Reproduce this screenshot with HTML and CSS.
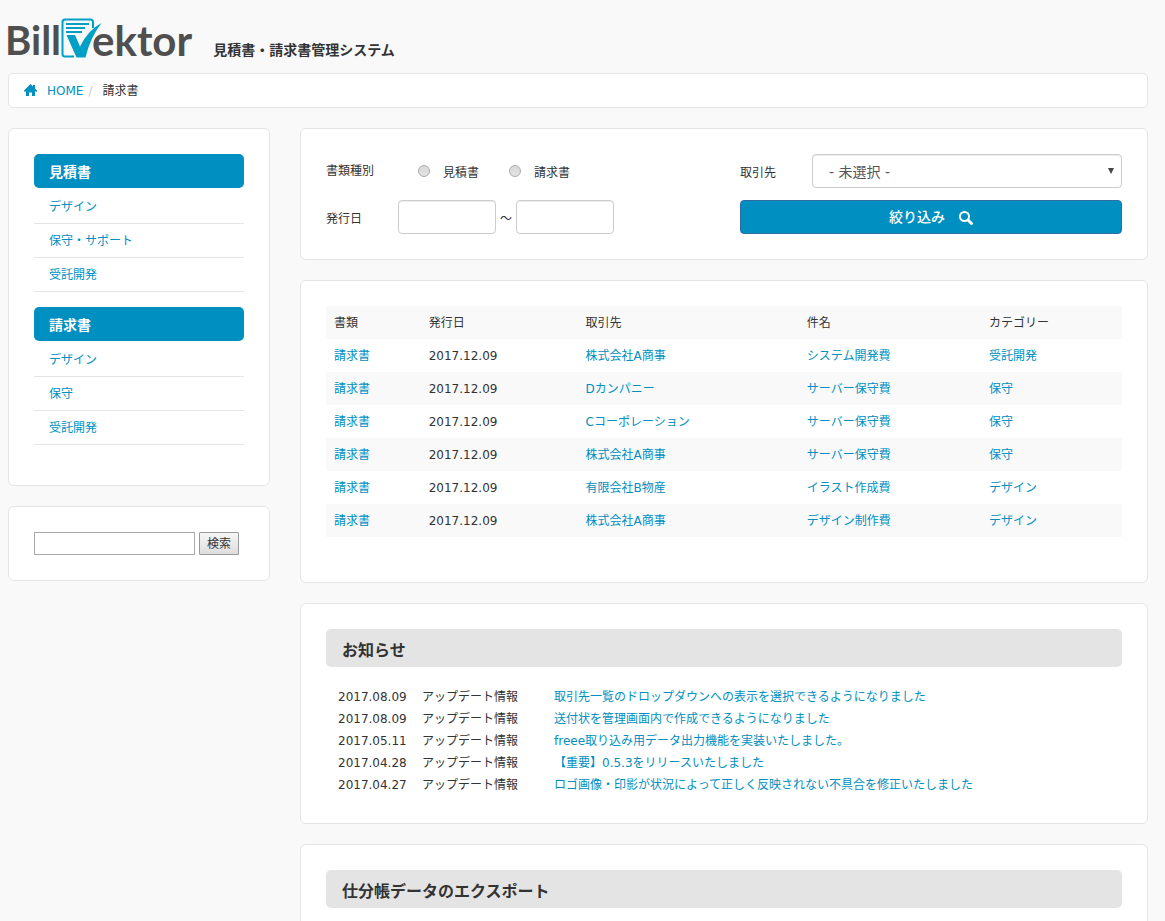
FILE: index.html
```html
<!DOCTYPE html>
<html lang="ja">
<head>
<meta charset="utf-8">
<title>BillVektor</title>
<meta name="viewport" content="width=device-width, initial-scale=1">
<link rel="stylesheet" href="styles.css">
</head>
<body>
<header class="site-header">
  <a class="logo" href="#" aria-label="BillVektor">
    <span class="logo-bill">Bill</span>
    <svg class="logo-mark" viewBox="0 0 41 42" aria-hidden="true">
      <path d="M32 10V4Q32 1.500 29.500 1.500H4Q1.500 1.500 1.500 4V36Q1.500 38.500 4 38.500H13" fill="none" stroke="#00a0c6" stroke-width="2"/>
      <path d="M5 6H28M5 10H24M5 14H21" fill="none" stroke="#00a0c6" stroke-width="2"/>
      <path d="M5.500 17H14L19 28.500Q27 12 40.500 5Q29 20 24.500 39.500H15.500Z" fill="#00a0c6"/>
    </svg>
    <span>ektor</span>
  </a>
  <p class="tagline">見積書・請求書管理システム</p>
</header>
<nav aria-label="パンくず">
  <ol class="breadcrumb">
    <li><a href="#"><svg class="home-icon" viewBox="0 0 13 12" aria-hidden="true"><path d="M6.500 0L9 2.500V1H11V4.500L13 6.500V7.500H11V12H8V8.500H5V12H2V7.500H0V6.500Z" fill="currentColor"/></svg>HOME</a></li>
    <li>請求書</li>
  </ol>
</nav>
<div class="columns">
  <aside class="sidebar">
    <nav class="card">
      <h2 class="side-title">見積書</h2>
      <ul class="side-list">
        <li><a href="#">デザイン</a></li>
        <li><a href="#">保守・サポート</a></li>
        <li><a href="#">受託開発</a></li>
      </ul>
      <h2 class="side-title">請求書</h2>
      <ul class="side-list">
        <li><a href="#">デザイン</a></li>
        <li><a href="#">保守</a></li>
        <li><a href="#">受託開発</a></li>
      </ul>
    </nav>
    <form class="card search">
      <input type="text" aria-label="検索">
      <button type="button">検索</button>
    </form>
  </aside>
  <main class="main">
    <form class="card filter">
      <div class="filter-col">
        <div class="filter-row" role="radiogroup" aria-labelledby="kind">
          <span class="filter-label" id="kind">書類種別</span>
          <label class="radio"><input type="radio" name="kind"><span>見積書</span></label>
          <label class="radio"><input type="radio" name="kind"><span>請求書</span></label>
        </div>
        <div class="filter-row">
          <label class="filter-label low" for="from">発行日</label>
          <input class="control date" type="text" id="from">
          <span class="tilde">～</span>
          <input class="control date" type="text" aria-label="発行日 終了">
        </div>
      </div>
      <div class="filter-col">
        <div class="filter-row">
          <label class="filter-label low" for="client">取引先</label>
          <div class="select-wrap">
            <select class="control" id="client"><option>- 未選択 -</option></select>
          </div>
        </div>
        <button class="submit" type="button">絞り込み
          <svg class="search-icon" viewBox="0 0 14 14" aria-hidden="true"><circle cx="5.500" cy="5.500" r="4.500" fill="none" stroke="currentColor" stroke-width="2"/><path d="M9 9L12.500 12.500" stroke="currentColor" stroke-width="3" stroke-linecap="round"/></svg>
        </button>
      </div>
    </form>
    <section class="card">
      <table class="docs">
        <colgroup><col class="c-kind"><col class="c-date"><col class="c-client"><col class="c-title"><col></colgroup>
        <thead><tr><th>書類</th><th>発行日</th><th>取引先</th><th>件名</th><th>カテゴリー</th></tr></thead>
        <tbody>
          <tr><td><a href="#">請求書</a></td><td>2017.12.09</td><td><a href="#">株式会社A商事</a></td><td><a href="#">システム開発費</a></td><td><a href="#">受託開発</a></td></tr>
          <tr><td><a href="#">請求書</a></td><td>2017.12.09</td><td><a href="#">Dカンパニー</a></td><td><a href="#">サーバー保守費</a></td><td><a href="#">保守</a></td></tr>
          <tr><td><a href="#">請求書</a></td><td>2017.12.09</td><td><a href="#">Cコーポレーション</a></td><td><a href="#">サーバー保守費</a></td><td><a href="#">保守</a></td></tr>
          <tr><td><a href="#">請求書</a></td><td>2017.12.09</td><td><a href="#">株式会社A商事</a></td><td><a href="#">サーバー保守費</a></td><td><a href="#">保守</a></td></tr>
          <tr><td><a href="#">請求書</a></td><td>2017.12.09</td><td><a href="#">有限会社B物産</a></td><td><a href="#">イラスト作成費</a></td><td><a href="#">デザイン</a></td></tr>
          <tr><td><a href="#">請求書</a></td><td>2017.12.09</td><td><a href="#">株式会社A商事</a></td><td><a href="#">デザイン制作費</a></td><td><a href="#">デザイン</a></td></tr>
        </tbody>
      </table>
    </section>
    <section class="card">
      <h2 class="section-title">お知らせ</h2>
      <table class="news">
        <tbody>
          <tr><td>2017.08.09</td><td>アップデート情報</td><td><a href="#">取引先一覧のドロップダウンへの表示を選択できるようになりました</a></td></tr>
          <tr><td>2017.08.09</td><td>アップデート情報</td><td><a href="#">送付状を管理画面内で作成できるようになりました</a></td></tr>
          <tr><td>2017.05.11</td><td>アップデート情報</td><td><a href="#">freee取り込み用データ出力機能を実装いたしました。</a></td></tr>
          <tr><td>2017.04.28</td><td>アップデート情報</td><td><a href="#">【重要】0.5.3をリリースいたしました</a></td></tr>
          <tr><td>2017.04.27</td><td>アップデート情報</td><td><a href="#">ロゴ画像・印影が状況によって正しく反映されない不具合を修正いたしました</a></td></tr>
        </tbody>
      </table>
    </section>
    <section class="card">
      <h2 class="section-title">仕分帳データのエクスポート</h2>
    </section>
  </main>
</div>
</body>
</html>
```
FILE: styles.css
```css
* { box-sizing: border-box; }

body {
  margin: 0;
  padding: 0 17px 20px 8px;
  background: #f9f9f9;
  color: #333;
  font: 12px/17px "DejaVu Sans", "Noto Sans CJK JP", sans-serif;
}

a { color: #008fc1; text-decoration: none; }
ul, ol { margin: 0; padding: 0; list-style: none; }
h2, p { margin: 0; }

input, button, select { font: inherit; color: inherit; }

.site-header {
  display: flex;
  align-items: flex-end;
  gap: 21px;
  height: 73px;
  padding-bottom: 13px;
}

.logo {
  display: flex;
  align-items: flex-end;
  margin-left: -3px;
  color: #4f4f4f;
  font: bold 42px/40px Lato, sans-serif;
}

.logo-bill { font-size: 40px; }

.logo-mark {
  width: 41px;
  height: 42px;
  margin: 0 -10px 0 0;
}

.tagline { font-size: 14px; font-weight: bold; line-height: 20px; }

.breadcrumb {
  display: flex;
  padding: 9px 15px 7px;
  background: #fff;
  border: 1px solid #e5e5e5;
  border-radius: 5px;
}

.breadcrumb li + li::before {
  content: "/";
  padding: 0 10px 0 5px;
  color: #ccc;
}

.home-icon { width: 13px; height: 12px; margin-right: 10px; vertical-align: -1px; }

.columns {
  display: grid;
  grid-template-columns: 262fr 848fr;
  gap: 30px;
  align-items: start;
  margin-top: 20px;
}

.sidebar, .main { display: grid; gap: 20px; min-width: 0; }

.card {
  padding: 25px;
  background: #fff;
  border: 1px solid #e5e5e5;
  border-radius: 6px;
}

.side-title {
  padding: 8px 15px 6px;
  border-radius: 5px;
  background: #008fc1;
  color: #fff;
  font-size: 14px;
  line-height: 20px;
}

.side-list { padding-top: 2px; margin-bottom: 15px; }

.side-list a {
  display: block;
  padding: 9px 15px 7px;
  border-bottom: 1px solid #e5e5e5;
}

.search { display: flex; gap: 4px; }

.search input {
  flex: 0 1 161px;
  min-width: 0;
  height: 23px;
  border: 1px solid #a9a9a9;
  background: #fff;
}

.search button {
  width: 40px;
  height: 23px;
  padding: 2px 0 0;
  border: 1px solid #999;
  border-radius: 1px;
  background: linear-gradient(#f6f6f6, #dedede);
}

.filter {
  display: grid;
  grid-template-columns: 414fr 382fr;
}

.filter-col { display: grid; gap: 12px; }
.filter-row { display: flex; align-items: center; height: 34px; }
.filter-label { flex: 0 0 72px; }
.filter-label.low, .tilde { padding-top: 4px; }

.radio {
  display: flex;
  align-items: center;
  gap: 13px;
  margin-left: 20px;
}

.radio + .radio { margin-left: 30px; }
.radio span { padding-top: 4px; }

.radio input {
  appearance: none;
  width: 12px;
  height: 12px;
  margin: 0;
  border: 1px solid #acacac;
  border-radius: 50%;
  background: linear-gradient(#d8d8d8, #e4e4e4);
}

.control {
  height: 34px;
  border: 1px solid #ccc;
  border-radius: 4px;
  background: #fff;
  box-shadow: inset 0 1px 1px rgba(0, 0, 0, .075);
}

.date { width: 98px; padding: 6px 12px; }
.tilde { width: 20px; text-align: center; }

.select-wrap { position: relative; flex: 1; }

.select-wrap::after {
  content: "";
  position: absolute;
  top: 14px;
  right: 8px;
  border: 3px solid transparent;
  border-top: 6px solid #444;
  border-bottom: 0;
  pointer-events: none;
}

select.control {
  appearance: none;
  display: block;
  width: 100%;
  padding: 3px 16px 0;
  color: #555;
  font-size: 14px;
}

.submit {
  display: flex;
  align-items: center;
  justify-content: center;
  gap: 14px;
  height: 34px;
  padding-top: 2px;
  border: 1px solid #2e6da4;
  border-radius: 4px;
  background: #008fc1;
  color: #fff;
  font-size: 14px;
  font-weight: 500;
}

.search-icon { width: 14px; height: 14px; }

table { width: 100%; border-collapse: collapse; }
th, td { padding: 0; text-align: left; font-weight: normal; }

.docs { table-layout: fixed; margin-bottom: 20px; }
.docs th, .docs td { padding: 9px 8px 7px; }
.docs thead tr, .docs tbody tr:nth-child(even) { background: #f9f9f9; }
.c-kind { width: 11.9%; }
.c-date { width: 19.7%; }
.c-client { width: 27.8%; }
.c-title { width: 22.9%; }

.section-title {
  padding: 12px 16px 6px;
  border-radius: 5px;
  background: #e4e4e4;
  font-size: 16px;
  line-height: 20px;
}

.news { margin: 19px 0 2px; }
.news td { line-height: 22px; }
.news td:nth-child(1) { width: 96px; padding-left: 12px; }
.news td:nth-child(2) { width: 132px; }
```
